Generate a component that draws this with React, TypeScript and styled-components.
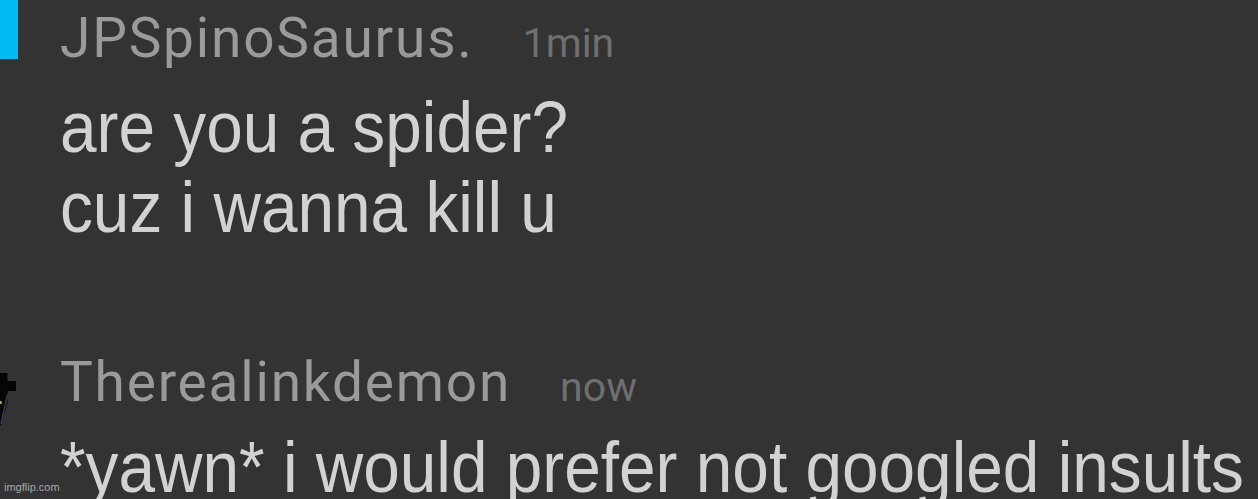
import React from "react";
import styled, { createGlobalStyle } from "styled-components";

const GlobalStyle = createGlobalStyle`
  html, body {
    margin: 0;
    padding: 0;
    background: #333333;
    overflow: hidden;
  }
`;

type CommentData = {
  user: string;
  time: string;
  lines: string[];
  bodyGap: number;
  offset: number;
  marker: "accent" | "doodle";
};

const comments: CommentData[] = [
  {
    user: "JPSpinoSaurus.",
    time: "1min",
    lines: ["are you a spider?", "cuz i wanna kill u"],
    bodyGap: 17,
    offset: 0,
    marker: "accent",
  },
  {
    user: "Therealinkdemon",
    time: "now",
    lines: ["*yawn* i would prefer not googled insults"],
    bodyGap: 13,
    offset: 97,
    marker: "doodle",
  },
];

const Doodle: React.FC = () => (
  <DoodleSvg width="18" height="56" viewBox="0 0 18 56">
    <path d="M0 0 H7.5 V30 L1 52 H0 Z" fill="#050505" />
    <rect x="7" y="8" width="9" height="10" fill="#050505" />
    <path d="M7.5 22 L1 51" stroke="#3a3f55" strokeWidth="1.4" />
    <rect x="0" y="28" width="1.6" height="3" fill="#c4bc3e" />
  </DoodleSvg>
);

const App: React.FC = () => {
  return (
    <>
      <GlobalStyle />
      <Screen>
        {comments.map((c) => (
          <Comment key={c.user} $offset={c.offset}>
            <Gutter>{c.marker === "accent" ? <Accent /> : <Doodle />}</Gutter>
            <Content>
              <Header>
                <UserName>{c.user}</UserName>
                <Time>{c.time}</Time>
              </Header>
              <Body $gap={c.bodyGap}>
                {c.lines.map((line) => (
                  <Line key={line}>{line}</Line>
                ))}
              </Body>
            </Content>
          </Comment>
        ))}
        <Watermark>imgflip.com</Watermark>
      </Screen>
    </>
  );
};

export default App;

const Screen = styled.div`
  position: relative;
  width: 1258px;
  height: 499px;
  overflow: hidden;
  background: #333333;
  display: flex;
  flex-direction: column;
`;

const Comment = styled.div<{ $offset: number }>`
  display: grid;
  grid-template-columns: 60px 1fr;
  margin-top: ${(p) => p.$offset}px;
`;

const Gutter = styled.div`
  display: flex;
  flex-direction: column;
  align-items: flex-start;
`;

const Accent = styled.div`
  width: 18px;
  height: 59px;
  background: #00bcf2;
`;

const DoodleSvg = styled.svg`
  display: block;
  margin-top: 29px;
`;

const Content = styled.div`
  display: flex;
  flex-direction: column;
  min-width: 0;
`;

const Header = styled.div`
  display: flex;
  align-items: baseline;
  padding-top: 6px;
  height: 64px;
  line-height: 64px;
  white-space: nowrap;
`;

const UserName = styled.span`
  font-family: Roboto, "Liberation Sans", sans-serif;
  font-size: 55px;
  letter-spacing: 1.8px;
  color: #9a9a9a;
`;

const Time = styled.span`
  margin-left: 49px;
  font-family: Roboto, "Liberation Sans", sans-serif;
  font-size: 41px;
  color: #6f6f6f;
`;

const Body = styled.div<{ $gap: number }>`
  margin-top: ${(p) => p.$gap}px;
  display: flex;
  flex-direction: column;
`;

const Line = styled.div`
  font-family: "Liberation Sans", Arial, sans-serif;
  font-size: 72px;
  line-height: 80px;
  height: 80px;
  color: #d2d2d2;
  white-space: nowrap;
  transform: scaleX(0.913);
  transform-origin: left center;
`;

const Watermark = styled.div`
  position: absolute;
  left: 4px;
  bottom: 5px;
  font-family: "Liberation Sans", Arial, sans-serif;
  font-size: 11px;
  line-height: 13px;
  color: #a8a8a8;
`;
